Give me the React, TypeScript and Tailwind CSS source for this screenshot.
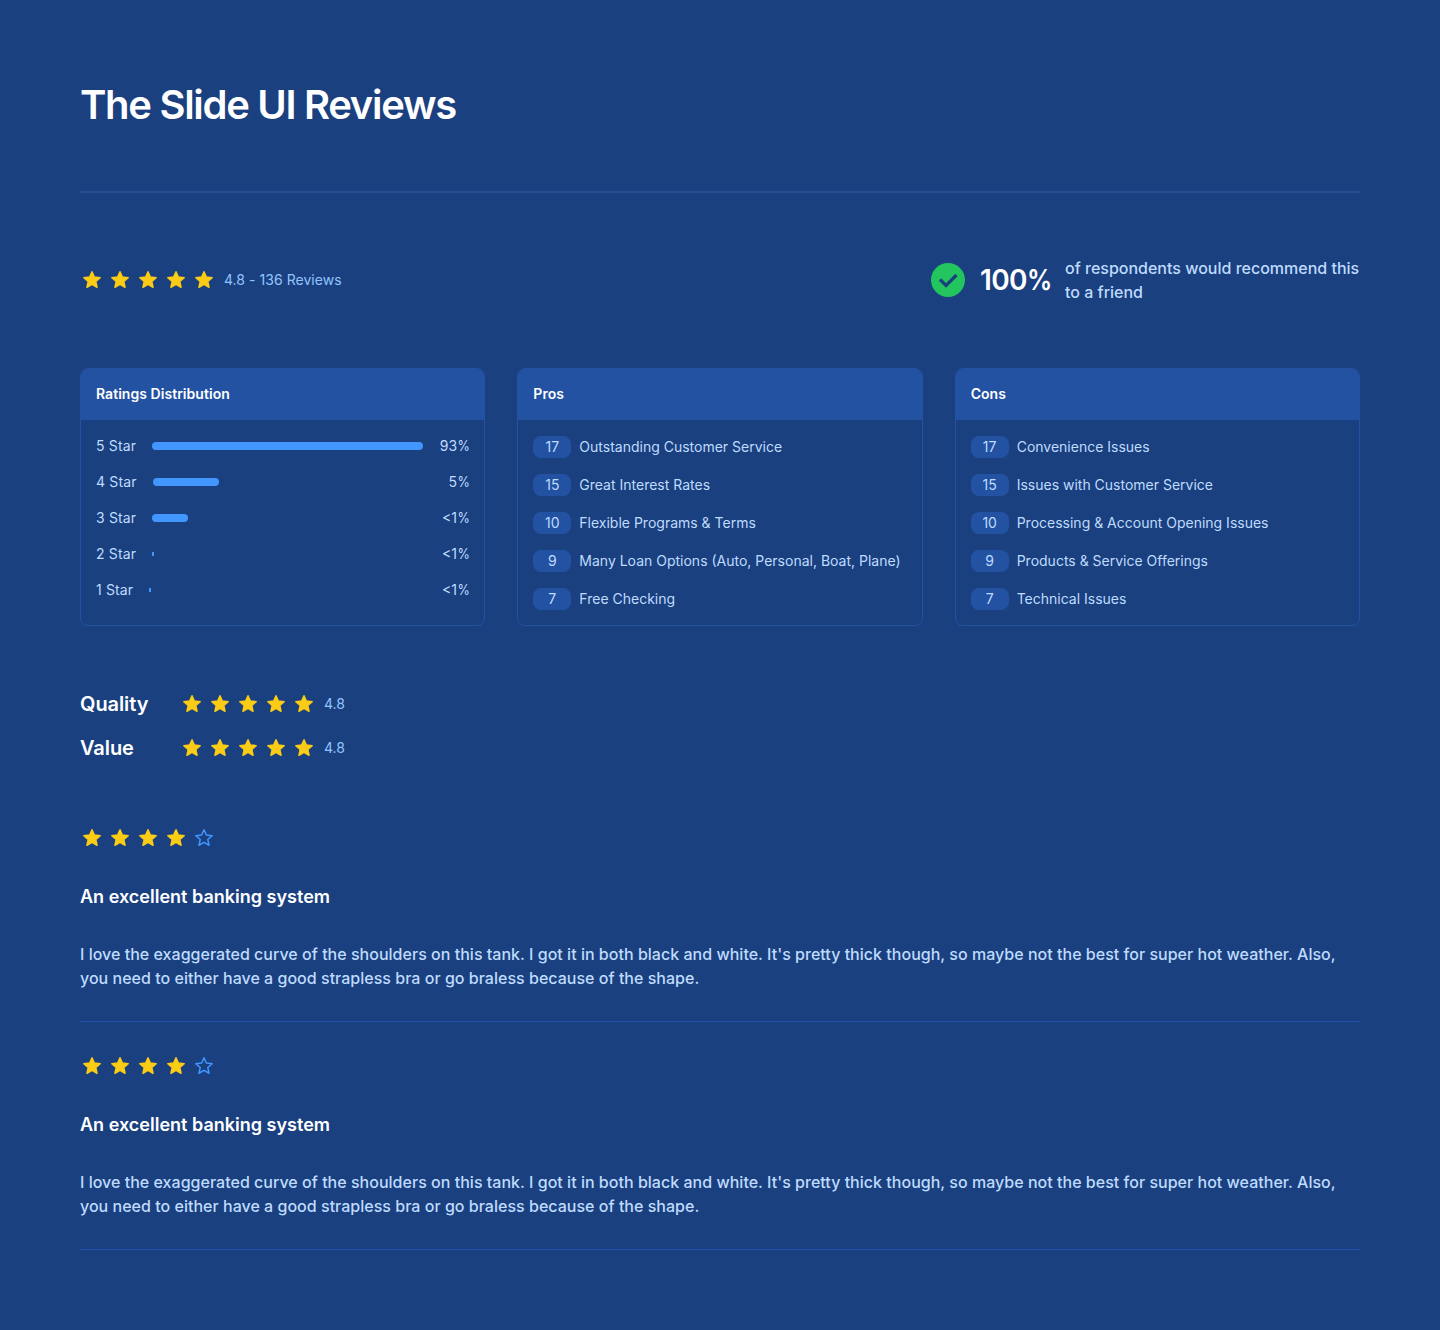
import type { ReactNode } from "react";

const STAR =
  "M12 3.7L14.35 9.06L20.18 9.64L15.8 13.54L17.05 19.26L12 16.3L6.95 19.26L8.2 13.54L3.82 9.64L9.65 9.06Z";

function Star({ filled }: { filled: boolean }) {
  return (
    <svg
      viewBox="0 0 24 24"
      className={filled ? "size-6 fill-[#facc15] stroke-[#facc15]" : "size-6 fill-none stroke-[#4196ff]"}
      strokeWidth="1.5"
      strokeLinejoin="round"
    >
      <path d={STAR} />
    </svg>
  );
}

function Stars({ value, label }: { value: number; label?: string }) {
  return (
    <div className="flex h-6 items-center gap-2">
      <div className="flex gap-1">
        {[1, 2, 3, 4, 5].map((n) => (
          <Star key={n} filled={n <= value} />
        ))}
      </div>
      {label && <span className="text-sm tracking-[0.04px] text-[#93c5fd]">{label}</span>}
    </div>
  );
}

function Card({ title, children }: { title: string; children: ReactNode }) {
  return (
    <section className="h-[258px] overflow-hidden rounded-lg border border-[#2352a3]">
      <h2 className="flex h-[51px] items-center bg-[#2352a3] px-[15px] pb-0.5 text-sm font-semibold tracking-[0.04px]">
        {title}
      </h2>
      {children}
    </section>
  );
}

function Counts({ items }: { items: [number, string][] }) {
  return (
    <ul className="flex flex-col gap-4 px-[15px] py-4">
      {items.map(([count, text]) => (
        <li key={text} className="flex h-[22px] items-center gap-2 text-sm text-[#bfdbfe]">
          <span className="flex h-[22px] w-[38px] items-center justify-center rounded-lg bg-[#2352a3]">{count}</span>
          <span>{text}</span>
        </li>
      ))}
    </ul>
  );
}

const ratings = [
  { label: "5 Star", share: "93%", bar: "h-2 w-[271px] rounded-full" },
  { label: "4 Star", share: "5%", bar: "h-2 w-[66px] rounded-full" },
  { label: "3 Star", share: "<1%", bar: "h-2 w-9 rounded-full" },
  { label: "2 Star", share: "<1%", bar: "h-1 w-0.5" },
  { label: "1 Star", share: "<1%", bar: "h-1 w-0.5" },
];

const pros: [number, string][] = [
  [17, "Outstanding Customer Service"],
  [15, "Great Interest Rates"],
  [10, "Flexible Programs & Terms"],
  [9, "Many Loan Options (Auto, Personal, Boat, Plane)"],
  [7, "Free Checking"],
];

const cons: [number, string][] = [
  [17, "Convenience Issues"],
  [15, "Issues with Customer Service"],
  [10, "Processing & Account Opening Issues"],
  [9, "Products & Service Offerings"],
  [7, "Technical Issues"],
];

function Review() {
  return (
    <article className="flex flex-col gap-8 border-b border-[#2150a8] pb-[31px]">
      <Stars value={4} />
      <h3 className="h-7 text-lg leading-[30px] font-semibold tracking-[0.01px]">An excellent banking system</h3>
      <p className="text-base leading-6 font-medium tracking-[0.02px] text-[#bfdbfe]">
        I love the exaggerated curve of the shoulders on this tank. I got it in both black and white. It's pretty thick
        though, so maybe not the best for super hot weather. Also, you need to either have a good strapless bra or go
        braless because of the shape.
      </p>
    </article>
  );
}

export default function App() {
  return (
    <main className="min-h-[1330px] bg-[#1a407f] p-20 font-['Inter',sans-serif] text-white">
      <h1 className="h-12 text-[40px] leading-[50px] font-semibold tracking-[-1.3px]">The Slide UI Reviews</h1>
      <hr className="mt-[63px] border-0 border-t-2 border-[#264e8f]" />

      <div className="mt-[63px] flex h-12 items-center justify-between">
        <Stars value={5} label="4.8 - 136 Reviews" />
        <div className="flex items-center gap-3">
          <svg viewBox="0 0 40 40" className="size-10">
            <circle cx="20" cy="20" r="17" fill="#22c55e" />
            <path d="M12 19.5l6 6 10.5-10.5" fill="none" stroke="#1a407f" strokeWidth="3.2" />
          </svg>
          <span className="w-[73px] text-[28px] font-semibold whitespace-nowrap tracking-[-0.7px]">
            100<span className="inline-block origin-left scale-x-90">%</span>
          </span>
          <p className="w-[295px] text-base leading-6 font-medium text-[#bfdbfe]">
            of respondents would recommend this to a friend
          </p>
        </div>
      </div>

      <div className="mt-16 grid grid-cols-3 gap-8">
        <Card title="Ratings Distribution">
          <ul className="flex flex-col gap-4 px-[15px] py-4">
            {ratings.map(({ label, share, bar }) => (
              <li key={label} className="flex h-5 items-center gap-4 text-sm text-[#bfdbfe]">
                <span className="tracking-[0.15px]">{label}</span>
                <span className={`bg-[#4196ff] ${bar}`} />
                <span className="ml-auto">
                  {share.slice(0, -1)}
                  <span className="-ml-[1.5px] inline-block origin-right scale-x-90">%</span>
                </span>
              </li>
            ))}
          </ul>
        </Card>
        <Card title="Pros">
          <Counts items={pros} />
        </Card>
        <Card title="Cons">
          <Counts items={cons} />
        </Card>
      </div>

      <div className="mt-16 flex flex-col gap-4">
        {["Quality", "Value"].map((name) => (
          <div key={name} className="flex h-7 items-center">
            <h3 className="w-[100px] text-xl font-semibold tracking-[-0.08px]">{name}</h3>
            <Stars value={5} label="4.8" />
          </div>
        ))}
      </div>

      <div className="mt-16 flex flex-col gap-8">
        <Review />
        <Review />
      </div>
    </main>
  );
}
